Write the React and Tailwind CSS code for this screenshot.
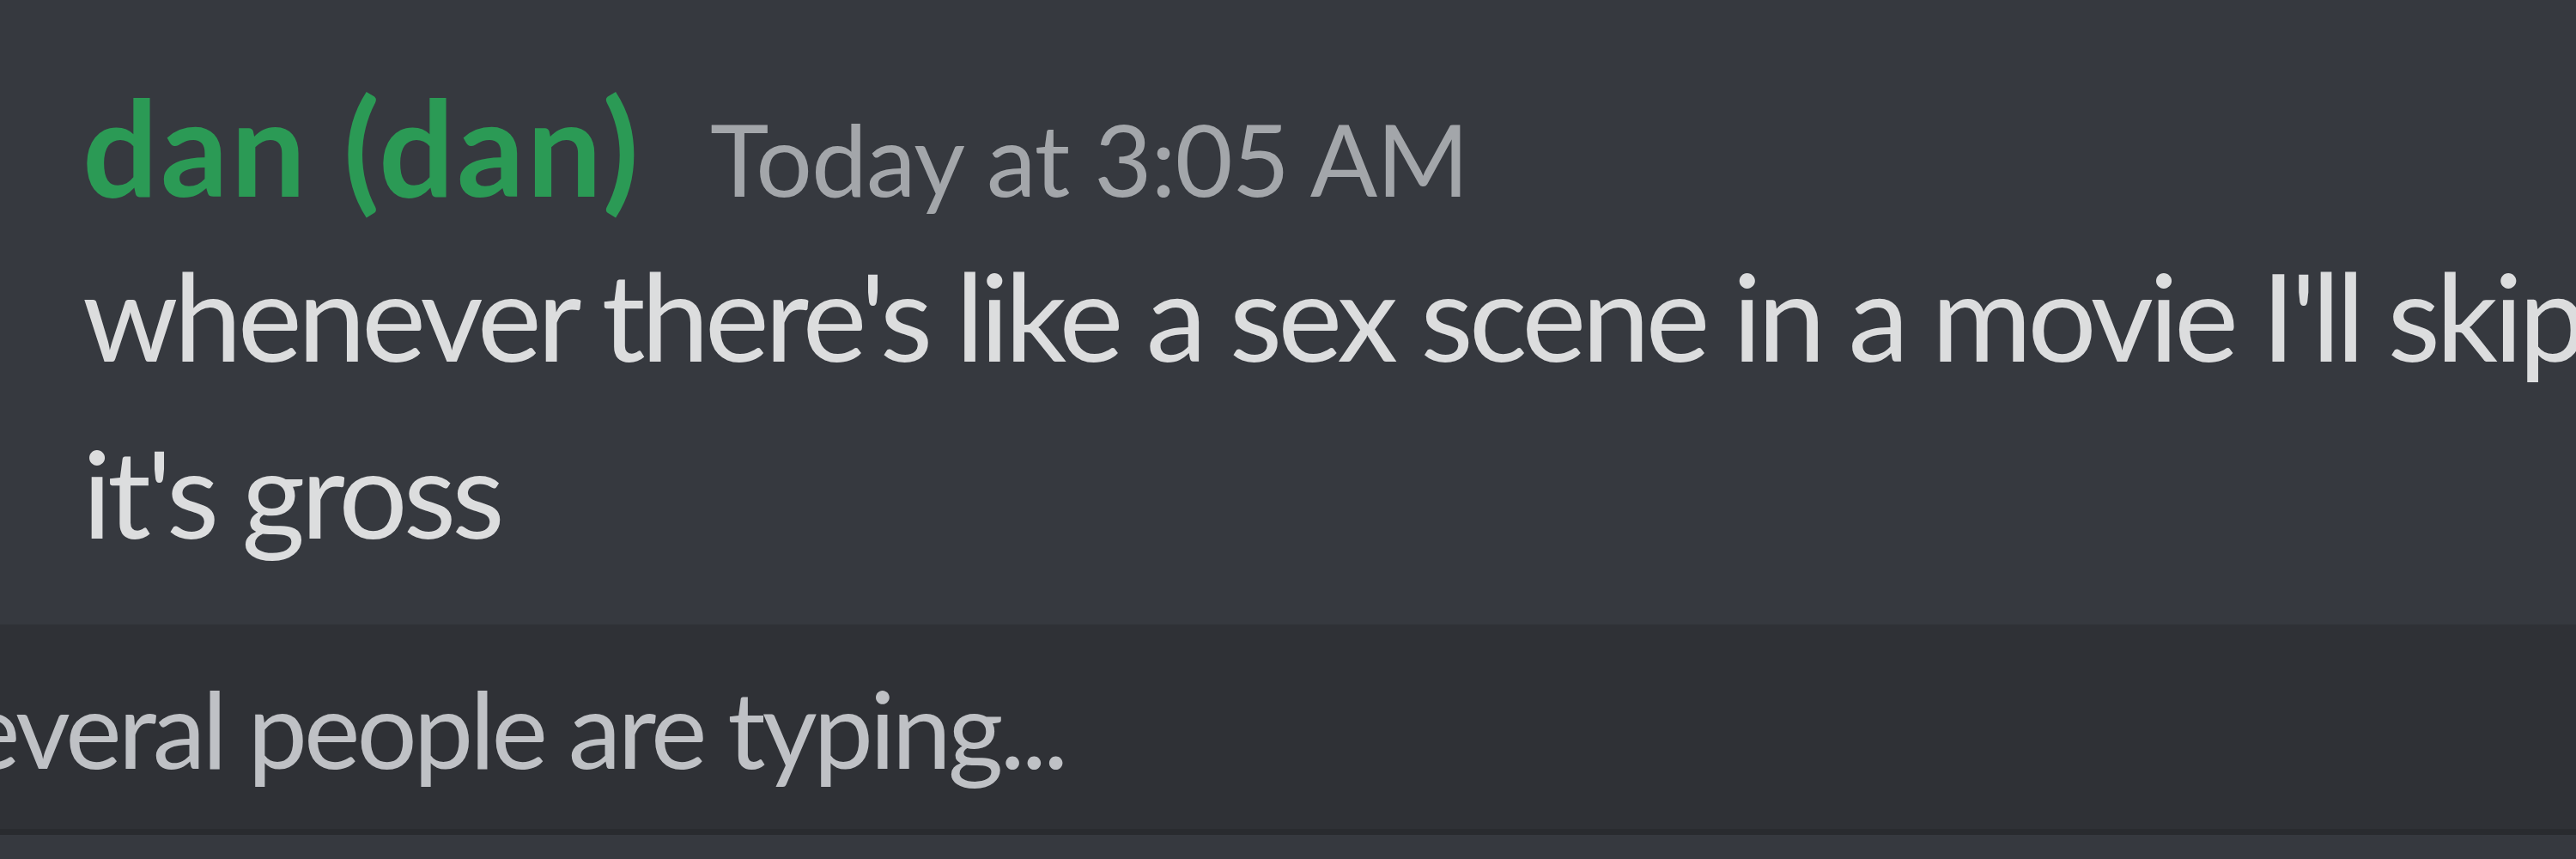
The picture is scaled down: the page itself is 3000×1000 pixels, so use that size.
export default function App() {
	return <div className="w-[3000px] h-[1000px] overflow-hidden bg-[#36393f] flex flex-col" style={{ fontFamily: 'Lato, "Open Sans", sans-serif' }}>
		<div className="pl-[96px] pt-[79px] whitespace-nowrap">
			<div className="flex items-baseline gap-[80px] h-[181px]">
				<span className="text-[155px] leading-[181px] font-bold tracking-[3px] text-[#2b9a55]">dan (dan)</span>
				<span className="text-[116px] leading-none tracking-[-1px] text-[#a3a6aa]">Today at 3:05 AM</span>
			</div>
			<div className="mt-[3px] text-[142px] leading-[206px] tracking-[-5px] text-[#dcddde]">
				<div>whenever there's like a sex scene in a movie I'll skip it</div>
				<div>it's gross</div>
			</div>
		</div>
		<div className="mt-[52px] h-[245px] shrink-0 bg-[#2f3136] border-b-[7px] border-[#292b2f] overflow-hidden whitespace-nowrap">
			<div className="-ml-[105px] text-[124px] leading-[240px] tracking-[-4px] text-[#bfc1c5]">Several people are typing...</div>
		</div>
		<div className="flex-1 bg-[#36393f]" />
	</div>;
}
